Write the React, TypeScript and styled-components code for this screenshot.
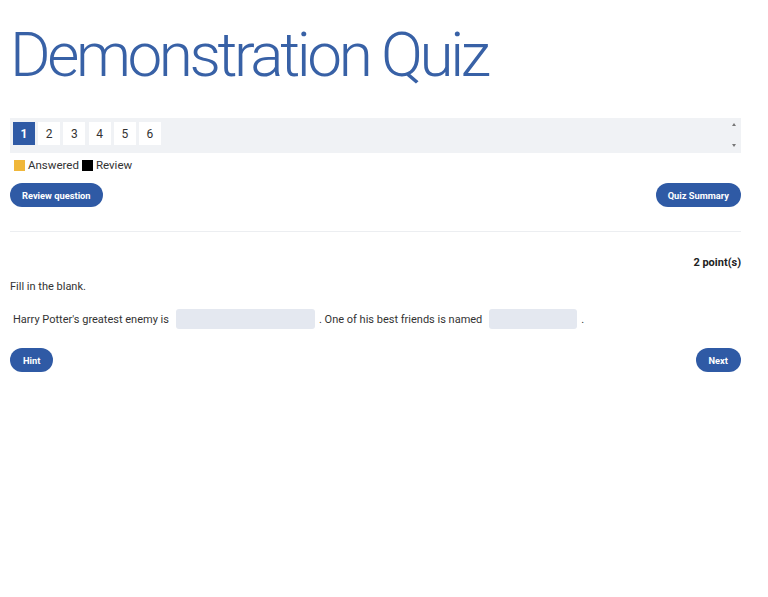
import styled, { createGlobalStyle } from 'styled-components';

const GlobalStyle = createGlobalStyle`
  body {
    margin: 0;
    background: #fff;
    font-family: Roboto, "Liberation Sans", sans-serif;
    font-size: 11px;
    color: #333;
  }
`;

const questions = [1, 2, 3, 4, 5, 6];

const App = () => {
  return (
    <>
      <GlobalStyle />
      <Page>
        <Title>Demonstration Quiz</Title>

        <NavBar>
          <NavList>
            {questions.map(n => (
              <NavItem key={n} $active={n === 1}>{n}</NavItem>
            ))}
          </NavList>
          <ScrollArrows>
            <Arrow $up />
            <Arrow />
          </ScrollArrows>
        </NavBar>

        <Legend>
          <Swatch $color="#f0b73a" />
          <span>Answered</span>
          <Swatch $color="#000" />
          <span>Review</span>
        </Legend>

        <ButtonRow>
          <PillButton>Review question</PillButton>
          <PillButton>Quiz Summary</PillButton>
        </ButtonRow>

        <Divider />

        <Points>2 point(s)</Points>
        <Prompt>Fill in the blank.</Prompt>

        <Sentence>
          Harry Potter's greatest enemy is
          <Blank $width={139} />
          . One of his best friends is named
          <Blank $width={88} />
          .
        </Sentence>

        <ButtonRow $gap={19}>
          <PillButton $wide>Hint</PillButton>
          <PillButton $wide>Next</PillButton>
        </ButtonRow>
      </Page>
    </>
  );
};

const Page = styled.div`
  width: 731px;
  margin-left: 10px;
`;

const Title = styled.h1`
  margin: 24px 0 0;
  font-size: 62px;
  line-height: 62px;
  font-weight: 300;
  color: #3861a6;
  letter-spacing: -3.4px;
`;

const NavBar = styled.div`
  margin-top: 32px;
  height: 35px;
  background: #f0f2f5;
  display: flex;
  justify-content: space-between;
`;

const NavList = styled.div`
  display: flex;
  gap: 3.2px;
  padding: 4px 3px;
`;

const NavItem = styled.div<{ $active?: boolean }>`
  width: 22px;
  height: 23px;
  display: flex;
  align-items: center;
  justify-content: center;
  font-size: 12px;
  font-weight: ${({ $active }) => ($active ? 700 : 400)};
  background: ${({ $active }) => ($active ? '#2f5aa5' : '#fff')};
  color: ${({ $active }) => ($active ? '#fff' : '#333')};
`;

const ScrollArrows = styled.div`
  width: 14px;
  display: flex;
  flex-direction: column;
  justify-content: space-between;
  align-items: center;
  padding: 5px 0 6px;
`;

const Arrow = styled.span<{ $up?: boolean }>`
  width: 0;
  height: 0;
  border-left: 2.5px solid transparent;
  border-right: 2.5px solid transparent;
  ${({ $up }) => ($up ? 'border-bottom: 3px solid #777;' : 'border-top: 3px solid #777;')}
`;

const Legend = styled.div`
  display: flex;
  align-items: center;
  gap: 3px;
  margin-top: 6px;
  padding-left: 4px;
  font-size: 11.5px;
  color: #333;
  line-height: 12px;
`;

const Swatch = styled.span<{ $color: string }>`
  width: 11px;
  height: 11px;
  background: ${({ $color }) => $color};
`;

const ButtonRow = styled.div<{ $gap?: number }>`
  display: flex;
  justify-content: space-between;
  margin-top: ${({ $gap }) => $gap ?? 12}px;
`;

const PillButton = styled.button<{ $wide?: boolean }>`
  height: 24px;
  padding: 0 ${({ $wide }) => ($wide ? 13 : 12)}px;
  border: none;
  border-radius: 12px;
  background: #2f5aa5;
  color: #fff;
  font-family: Roboto, "Liberation Sans", sans-serif;
  font-size: 9.3px;
  font-weight: 700;
`;

const Divider = styled.hr`
  margin: 24px 0 0;
  border: none;
  border-top: 1px solid #eceef1;
`;

const Points = styled.div`
  margin-top: 24px;
  text-align: right;
  font-weight: 700;
  font-size: 11px;
  color: #222;
`;

const Prompt = styled.p`
  margin: 11px 0 0;
  font-size: 11px;
`;

const Sentence = styled.div`
  display: flex;
  align-items: center;
  margin-top: 16px;
  padding-left: 3px;
  font-size: 11px;
  white-space: pre;
`;

const Blank = styled.span<{ $width: number }>`
  width: ${({ $width }) => $width}px;
  height: 20px;
  margin: 0 4px 0 7px;
  border-radius: 3px;
  background: #e4e8f0;
`;

export default App;
